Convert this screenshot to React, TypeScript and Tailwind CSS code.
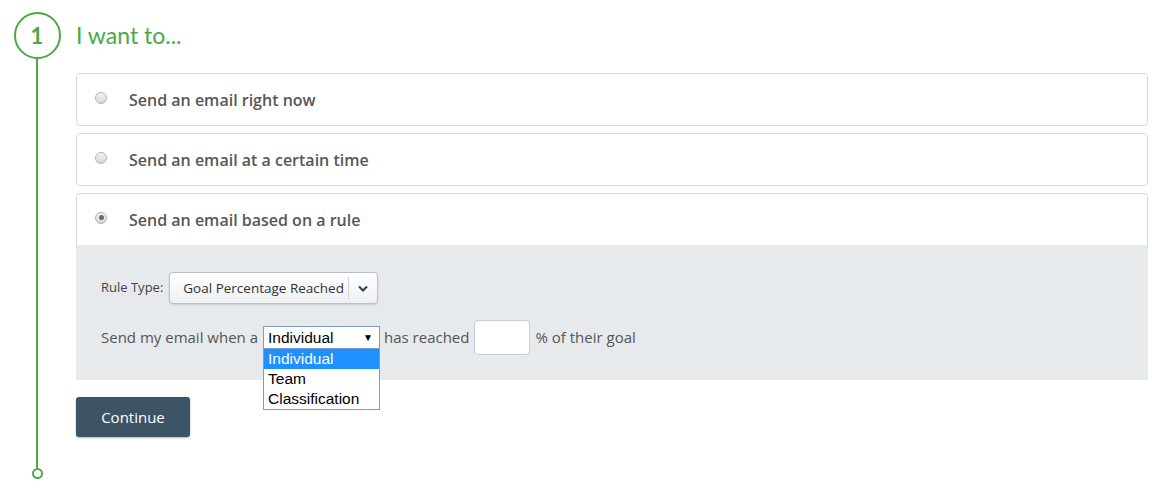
import React from "react";

const font = { fontFamily: "'Open Sans', Lato, Arial, sans-serif" };
const titleFont = { fontFamily: "Lato, 'Open Sans', Arial, sans-serif" };
const selectFont = { fontFamily: "'Liberation Sans', Arial, sans-serif" };

const Radio = ({ checked }: { checked?: boolean }) => (
  <span className="relative -top-[2px] flex h-[12px] w-[12px] items-center justify-center rounded-full border border-[#b3b3b3] bg-gradient-to-b from-[#f4f4f4] to-[#d6d6d6]">
    {checked && <span className="h-[5px] w-[5px] rounded-full bg-[#6a6a6a]" />}
  </span>
);

const Option = ({ label, checked, open }: { label: string; checked?: boolean; open?: boolean }) => (
  <div
    className={`flex h-[53px] items-center gap-[22px] border border-[#d6dbdf] bg-white pl-[18px] ${
      open ? "rounded-t-[4px] border-b-[#e2e6e9]" : "rounded-[4px]"
    }`}
  >
    <Radio checked={checked} />
    <span className="text-[16px] font-semibold text-[#575757]">{label}</span>
  </div>
);

export default function App() {
  return (
    <div className="flex h-[496px] w-[1166px] bg-white pl-[13px] pt-[12px] pb-[17px]" style={font}>
      {/* step rail */}
      <div className="flex w-[48px] flex-col items-center">
        <div
          className="flex h-[47px] w-[47px] items-center justify-center rounded-full border-2 border-[#4aa846] text-[22px] font-bold text-[#4aa846]"
          style={titleFont}
        >
          1
        </div>
        <div className="w-[2px] flex-1 bg-[#4aa846]" />
        <div className="h-[11px] w-[11px] rounded-full border-2 border-[#4aa846]" />
      </div>

      <div className="ml-[15px] mr-[18px] flex-1">
        <h1 className="flex h-[47px] items-center text-[23px] font-normal text-[#4aa846]" style={titleFont}>
          I want to...
        </h1>

        <div className="mt-[14px] flex flex-col gap-[7px]">
          <Option label="Send an email right now" />
          <Option label="Send an email at a certain time" />
          <div>
            <Option label="Send an email based on a rule" checked open />
            <div className="h-[134px] bg-[#e6eaec] pl-[25px] pt-[26px]">
              <div className="flex items-center gap-[6px] text-[13px] text-[#444]">
                <span>Rule Type:</span>
                <div className="flex h-[32px] w-[209px] items-center rounded-[4px] border border-[#b9c0c6] bg-gradient-to-b from-white to-[#eef0f2] shadow-[0_1px_2px_rgba(0,0,0,0.12)]">
                  <span className="flex-1 pl-[13px] text-[13.5px] text-[#333]">Goal Percentage Reached</span>
                  <span className="h-[22px] w-px bg-[#cfd4d8]" />
                  <span className="flex w-[28px] items-center justify-center">
                    <svg width="10" height="7" viewBox="0 0 10 7">
                      <path d="M1 1.5 L5 5.5 L9 1.5" fill="none" stroke="#2c3e4c" strokeWidth="2" />
                    </svg>
                  </span>
                </div>
              </div>

              <div className="mt-[16px] flex items-center text-[15px] text-[#555]">
                <span>Send my email when a</span>
                <div className="relative ml-[5px]" style={selectFont}>
                  <div className="flex h-[23px] w-[117px] items-center justify-between border border-[#7b9bd0] bg-white pl-[4px] pr-[6px] text-[15.5px] text-black">
                    <span>Individual</span>
                    <span className="text-[10px]">▼</span>
                  </div>
                  <div className="absolute left-0 top-[22px] z-10 w-[117px] border border-[#7b9bd0] bg-white text-[15.5px] text-black">
                    <div className="flex h-[20px] items-center bg-[#1e90ff] pl-[4px] text-white">Individual</div>
                    <div className="flex h-[20px] items-center pl-[4px]">Team</div>
                    <div className="flex h-[20px] items-center pl-[4px]">Classification</div>
                  </div>
                </div>
                <span className="ml-[4px]">has reached</span>
                <div className="ml-[5px] h-[35px] w-[56px] rounded-[4px] border border-[#c8ced3] bg-white" />
                <span className="ml-[5px]">% of their goal</span>
              </div>
            </div>
          </div>
        </div>

        <button className="mt-[17px] h-[40px] w-[114px] rounded-[3px] bg-[#3d5464] text-[15px] text-white shadow-[0_1px_2px_rgba(0,0,0,0.3)]">
          Continue
        </button>
      </div>
    </div>
  );
}
